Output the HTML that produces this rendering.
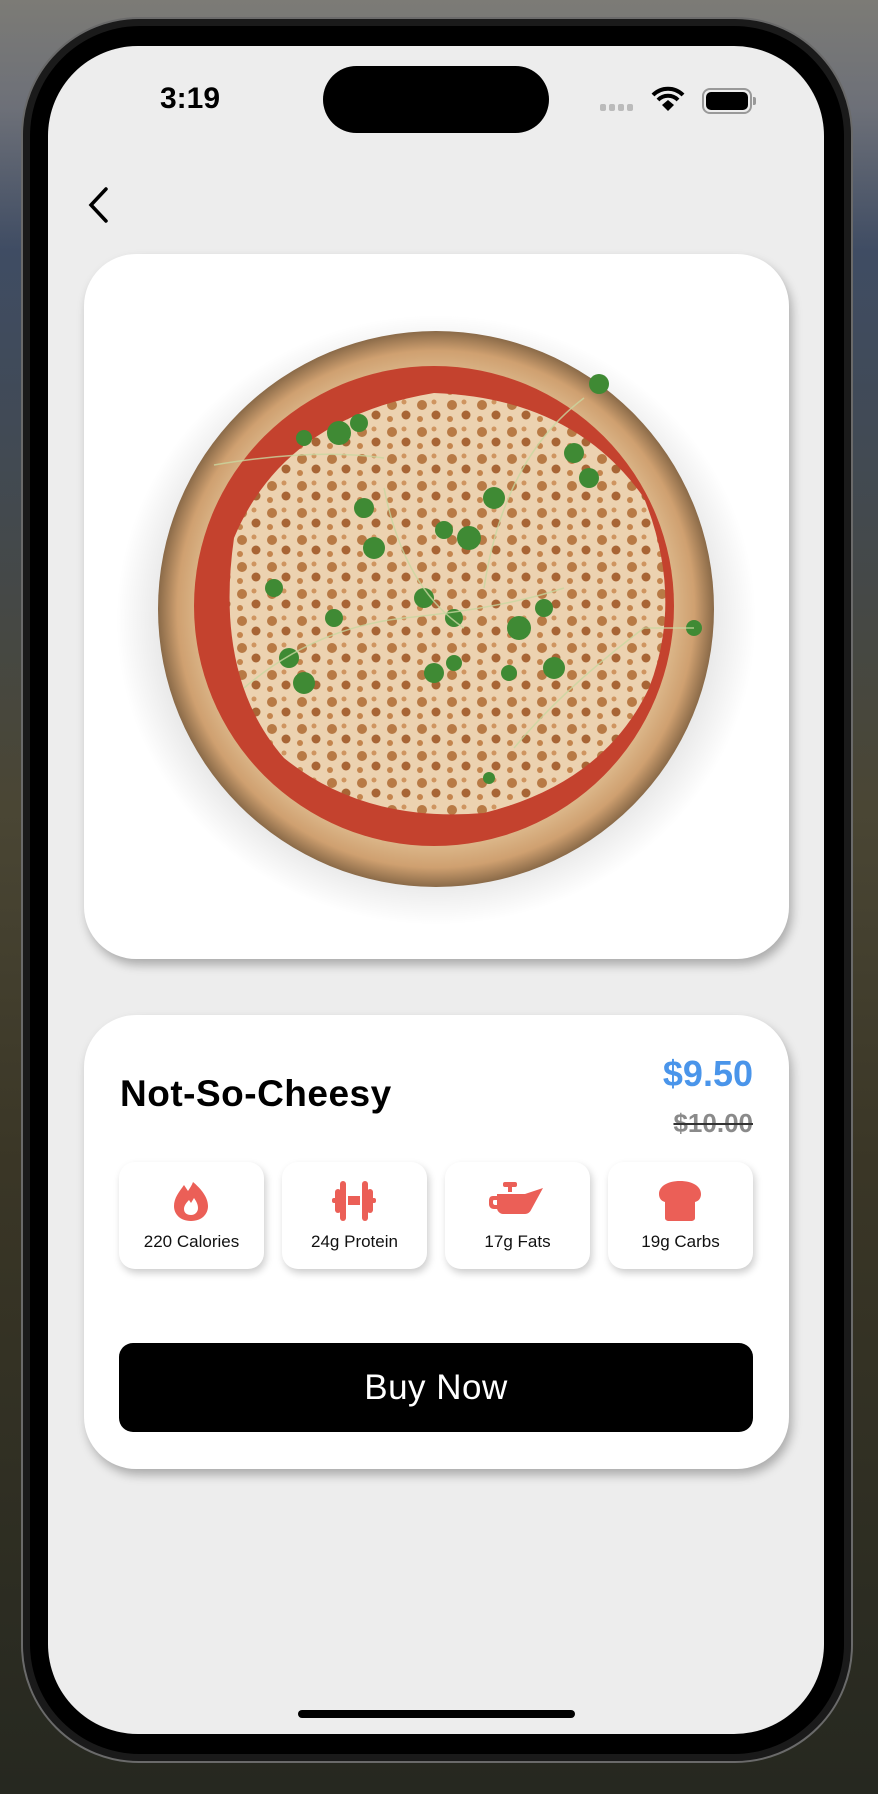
<!DOCTYPE html>
<html><head><meta charset="utf-8"><style>
*{margin:0;padding:0;box-sizing:border-box}
body{width:878px;height:1794px;overflow:hidden;font-family:"Liberation Sans",sans-serif;
background:linear-gradient(180deg,#7c7b76 0%,#6d7078 6%,#3f4c63 14%,#414a55 24%,#4a4634 45%,#3a3626 65%,#262820 100%);position:relative}
.frame{position:absolute;left:21px;top:17px;width:832px;height:1746px;border-radius:118px;background:#1a1a1a;border:2px solid #6a6a6a}
.bezel{position:absolute;left:30px;top:26px;width:814px;height:1728px;border-radius:110px;background:#000}
.screen{position:absolute;left:48px;top:46px;width:776px;height:1688px;border-radius:90px;background:#ededed;overflow:hidden}
.island{position:absolute;left:275px;top:20px;width:226px;height:67px;border-radius:34px;background:#000}
.time{position:absolute;left:112px;top:36px;font-size:30px;font-weight:bold;color:#000}
.card{position:absolute;left:36px;width:705px;background:#fff;border-radius:52px;box-shadow:3px 6px 10px rgba(0,0,0,.28)}
.nut{position:absolute;top:147px;width:145px;height:107px;background:#fff;border-radius:16px;box-shadow:2px 4px 8px rgba(0,0,0,.2);text-align:center}
.nut svg{position:absolute;left:52px;top:18px}
.nut span{position:absolute;left:0;right:0;top:70px;font-size:17px;color:#111}
</style></head><body>
<div class="frame"></div><div class="bezel"></div>
<div class="screen">
 <div class="time">3:19</div>
 <div class="island"></div>
 <div style="position:absolute;left:552px;top:58px;display:flex;gap:3px">
  <i style="width:6px;height:7px;background:#bbb;border-radius:2px"></i><i style="width:6px;height:7px;background:#bbb;border-radius:2px"></i><i style="width:6px;height:7px;background:#bbb;border-radius:2px"></i><i style="width:6px;height:7px;background:#bbb;border-radius:2px"></i></div>
 <svg style="position:absolute;left:603px;top:40px" width="34" height="26" viewBox="0 0 34 26"><path d="M2 9a21 21 0 0 1 30 0" stroke="#000" stroke-width="4" fill="none"/><path d="M7 14a14 14 0 0 1 20 0" stroke="#000" stroke-width="4" fill="none"/><path d="M11 19l6-5 6 5-6 6z" fill="#000"/></svg>
 <div style="position:absolute;left:654px;top:42px;width:50px;height:26px;border:2px solid #999;border-radius:8px;padding:2px"><div style="width:100%;height:100%;background:#000;border-radius:5px"></div></div>
 <div style="position:absolute;left:705px;top:51px;width:3px;height:8px;background:#999;border-radius:0 2px 2px 0"></div>
 <svg style="position:absolute;left:38px;top:140px" width="26" height="38" viewBox="0 0 26 38"><path d="M20 3L5 19l15 16" stroke="#000" stroke-width="3.5" fill="none" stroke-linecap="round"/></svg>

 <div class="card" style="top:208px;height:705px">
  <svg width="705" height="705" viewBox="0 0 705 705" style="position:absolute;left:0;top:0;border-radius:52px">
   <defs>
    <radialGradient id="sh"><stop offset="0.8" stop-color="#000" stop-opacity=".25"/><stop offset="1" stop-color="#000" stop-opacity="0"/></radialGradient>
    <radialGradient id="cr"><stop offset=".82" stop-color="#e0bf93"/><stop offset=".93" stop-color="#cfa070"/><stop offset="1" stop-color="#8a6a48"/></radialGradient>
    <pattern id="sp" width="30" height="27" patternUnits="userSpaceOnUse"><rect width="30" height="27" fill="#ecd2b0"/><circle cx="8" cy="8" r="5" fill="#b87a45"/><circle cx="22" cy="18" r="4.5" fill="#a86535"/><circle cx="20" cy="5" r="2.5" fill="#cf9560"/><circle cx="6" cy="22" r="3" fill="#c4854e"/></pattern>
   </defs>
   <g transform="translate(0,-46)">
   <ellipse cx="352" cy="412" rx="320" ry="305" fill="url(#sh)" opacity=".5"/>
   <circle cx="352" cy="401" r="278" fill="url(#cr)"/>
   <circle cx="350" cy="398" r="240" fill="#c4422e"/>
   <path d="M150 330Q200 210 350 185Q490 190 560 290Q600 390 565 480Q520 575 400 605Q280 615 200 550Q130 470 150 330Z" fill="url(#sp)"/>
   <g fill="#3f8a34">
    <circle cx="255" cy="225" r="12"/><circle cx="275" cy="215" r="9"/><circle cx="220" cy="230" r="8"/>
    <circle cx="515" cy="176" r="10"/><circle cx="490" cy="245" r="10"/><circle cx="505" cy="270" r="10"/>
    <circle cx="410" cy="290" r="11"/><circle cx="385" cy="330" r="12"/><circle cx="360" cy="322" r="9"/>
    <circle cx="280" cy="300" r="10"/><circle cx="290" cy="340" r="11"/><circle cx="250" cy="410" r="9"/>
    <circle cx="190" cy="380" r="9"/><circle cx="340" cy="390" r="10"/><circle cx="370" cy="410" r="9"/>
    <circle cx="435" cy="420" r="12"/><circle cx="460" cy="400" r="9"/><circle cx="470" cy="460" r="11"/>
    <circle cx="425" cy="465" r="8"/><circle cx="205" cy="450" r="10"/><circle cx="220" cy="475" r="11"/>
    <circle cx="350" cy="465" r="10"/><circle cx="370" cy="455" r="8"/><circle cx="610" cy="420" r="8"/>
    <circle cx="405" cy="570" r="6"/>
   </g>
   <g stroke="#c9d7a0" stroke-width="1.5" fill="none" opacity=".8">
    <path d="M130 257Q230 240 300 250"/><path d="M500 190Q420 250 400 380"/><path d="M160 480Q230 420 320 410Q420 400 480 380"/><path d="M300 280Q320 380 380 420"/><path d="M430 540Q480 480 560 420Q600 420 610 420"/>
   </g>
   </g>
  </svg>
 </div>

 <div class="card" style="top:969px;height:454px">
  <div style="position:absolute;left:36px;top:58px;font-size:37px;font-weight:bold;color:#000;letter-spacing:.5px">Not-So-Cheesy</div>
  <div style="position:absolute;right:36px;top:38px;font-size:36px;font-weight:bold;color:#4a95ea">$9.50</div>
  <div style="position:absolute;right:36px;top:93px;font-size:26px;font-weight:bold;color:#8a8a8a;text-decoration:line-through;text-decoration-color:#333">$10.00</div>
  <div class="nut" style="left:35px"><svg width="40" height="42" viewBox="0 0 40 42"><path d="M20 41C9 41 3 34 3 26c0-8 5-14 10-21l4 6c2-3 4-6 5-9 6 5 15 14 15 24 0 8-6 15-17 15z" fill="#eb5f57"/><path d="M20 35c-4 0-7-2-7-6 0-3 2-6 5-9l2 3 3-5c2 3 4 6 4 10 0 4-3 7-7 7z" fill="#fff"/></svg><span>220 Calories</span></div>
  <div class="nut" style="left:198px"><svg width="44" height="42" viewBox="0 0 44 42" style="left:50px"><g fill="#eb5f57"><rect x="8" y="1" width="6" height="40" rx="3"/><rect x="30" y="1" width="6" height="40" rx="3"/><rect x="3" y="9" width="6" height="24" rx="3"/><rect x="35" y="9" width="6" height="24" rx="3"/><rect x="0" y="18" width="44" height="5" rx="2"/><rect x="16" y="16" width="12" height="9"/></g><rect x="14" y="18" width="2" height="5" fill="#fff"/><rect x="28" y="18" width="2" height="5" fill="#fff"/></svg><span>24g Protein</span></div>
  <div class="nut" style="left:361px"><svg width="56" height="42" viewBox="0 0 56 42" style="left:44px"><g fill="#eb5f57"><rect x="14" y="2" width="14" height="5" rx="2"/><rect x="19" y="6" width="4" height="6"/><path d="M8 14h28l18-6-12 22c-1 2-3 4-6 4H14c-3 0-6-3-6-6z"/><path d="M8 16H4c-3 0-4 2-4 5v3c0 3 2 5 5 5h4v-4H6c-1 0-2-1-2-2v-2c0-1 1-1 2-1h2z"/></g></svg><span>17g Fats</span></div>
  <div class="nut" style="left:524px"><svg width="44" height="42" viewBox="0 0 44 42" style="left:50px"><path d="M22 1C10 1 1 6 1 14c0 4 2 7 6 8v16c0 2 2 3 4 3h22c2 0 4-1 4-3V22c4-1 6-4 6-8C43 6 34 1 22 1z" fill="#eb5f57"/></svg><span>19g Carbs</span></div>
  <div style="position:absolute;left:35px;top:328px;width:634px;height:89px;background:#000;border-radius:14px;color:#fff;font-size:35px;text-align:center;line-height:89px;letter-spacing:.5px">Buy Now</div>
 </div>
 <div style="position:absolute;left:250px;top:1664px;width:277px;height:8px;border-radius:4px;background:#000"></div>
</div>
</body></html>
